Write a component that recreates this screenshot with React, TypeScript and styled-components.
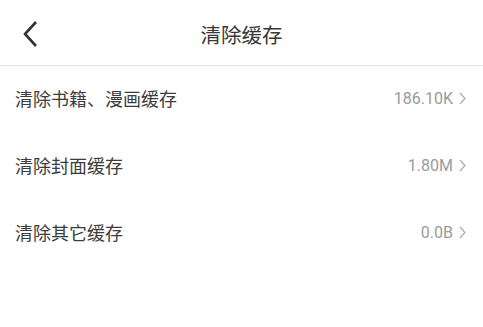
import React from "react";
import styled, { createGlobalStyle } from "styled-components";

const GlobalStyle = createGlobalStyle`
  html, body {
    margin: 0;
    padding: 0;
    background: #fff;
  }
  body {
    font-family: Roboto, "Noto Sans CJK SC", sans-serif;
  }
`;

type CacheItem = {
    label: string;
    size: string;
};

const items: CacheItem[] = [
    { label: "清除书籍、漫画缓存", size: "186.10K" },
    { label: "清除封面缓存", size: "1.80M" },
    { label: "清除其它缓存", size: "0.0B" },
];

export default function App() {
    return (
        <>
            <GlobalStyle />
            <Page>
                <Header>
                    <BackButton aria-label="返回">
                        <svg width="16" height="28" viewBox="0 0 16 28" fill="none">
                            <path d="M14 2 L3 14 L14 26" stroke="#333" strokeWidth="2.6" strokeLinejoin="miter" />
                        </svg>
                    </BackButton>
                    <Title>清除缓存</Title>
                </Header>
                <List>
                    {items.map((item) => (
                        <Row key={item.label}>
                            <Label>{item.label}</Label>
                            <Value>
                                {item.size}
                                <svg width="7" height="13" viewBox="0 0 7 13" fill="none">
                                    <path d="M1 1 L6 6.5 L1 12" stroke="#aaa" strokeWidth="1.2" />
                                </svg>
                            </Value>
                        </Row>
                    ))}
                </List>
            </Page>
        </>
    );
}

const Page = styled.div`
    width: 483px;
    height: 327px;
    background: #fff;
    overflow: hidden;
`;

const Header = styled.div`
    position: relative;
    height: 65px;
    display: flex;
    align-items: center;
    justify-content: center;
    border-bottom: 1px solid #e6e6e6;
    box-shadow: 0 1px 2px rgba(0, 0, 0, 0.04);
`;

const BackButton = styled.div`
    position: absolute;
    left: 22px;
    top: 20px;
    width: 16px;
    height: 28px;
    display: flex;
`;

const Title = styled.div`
    font-family: "Noto Sans CJK SC", sans-serif;
    font-size: 20.5px;
    color: #383838;
    margin-top: 3px;
`;

const List = styled.div`
    display: flex;
    flex-direction: column;
`;

const Row = styled.div`
    height: 64px;
    display: flex;
    align-items: center;
    justify-content: space-between;
    padding: 0 17px 3px 15px;
`;

const Label = styled.div`
    font-family: "Noto Sans CJK SC", sans-serif;
    font-size: 18px;
    color: #3c3c3c;
`;

const Value = styled.div`
    display: flex;
    align-items: center;
    gap: 6px;
    font-family: Roboto, sans-serif;
    font-size: 16px;
    color: #9a9a9a;
`;
